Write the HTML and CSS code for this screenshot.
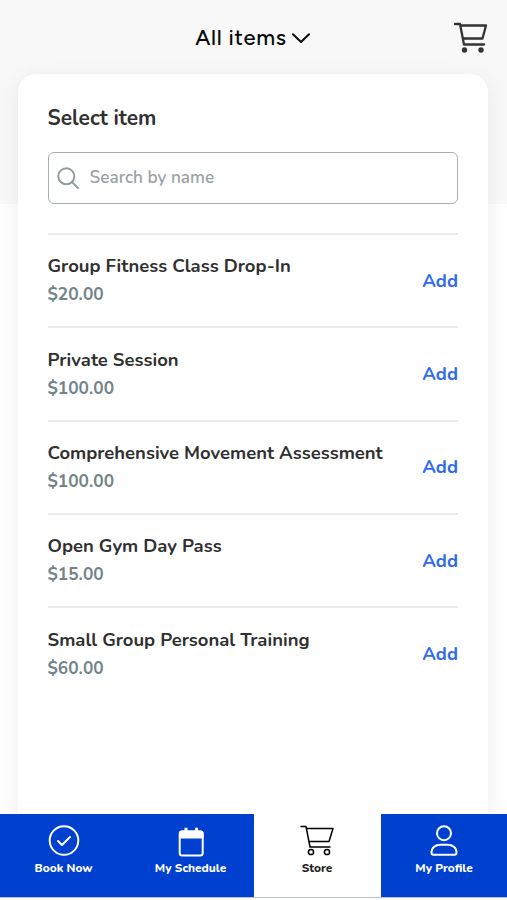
FILE: index.html
```html
<!DOCTYPE html>
<html lang="en">
<head>
<meta charset="utf-8">
<meta name="viewport" content="width=device-width, initial-scale=1">
<title>Store</title>
<link rel="stylesheet" href="styles.css">
</head>
<body>
<div class="app">
  <header class="topbar">
    <button class="filter"><span>All items</span>
      <svg class="chevron" width="18" height="11" viewBox="0 0 18 11"><path d="M1 1.200 9 9 17 1.200"/></svg>
    </button>
    <button class="cart" aria-label="Cart">
      <svg width="34" height="32" viewBox="0 0 34 32"><path d="M1 2h5l4 20.500h20M6.700 3.500H32l-3.500 13H8.800"/><circle cx="10.500" cy="28" r="2.700"/><circle cx="27" cy="28" r="2.700"/></svg>
    </button>
  </header>
  <main class="card">
    <h1 class="title">Select item</h1>
    <label class="search">
      <svg width="22" height="22" viewBox="0 0 22 22"><circle cx="9.300" cy="9.300" r="8"/><path d="m15 15 6 6"/></svg>
      <input class="search-input" type="text" placeholder="Search by name">
    </label>
    <ul class="items">
      <li class="item"><div><div class="name">Group Fitness Class Drop-In</div><div class="price">$20.00</div></div><button class="add">Add</button></li>
      <li class="item"><div><div class="name">Private Session</div><div class="price">$100.00</div></div><button class="add">Add</button></li>
      <li class="item"><div><div class="name">Comprehensive Movement Assessment</div><div class="price">$100.00</div></div><button class="add">Add</button></li>
      <li class="item"><div><div class="name">Open Gym Day Pass</div><div class="price">$15.00</div></div><button class="add">Add</button></li>
      <li class="item"><div><div class="name">Small Group Personal Training</div><div class="price">$60.00</div></div><button class="add">Add</button></li>
    </ul>
  </main>
  <nav class="tabs">
    <a class="tab"><svg width="34" height="32" viewBox="0 0 34 32"><circle cx="17" cy="15.500" r="14.300"/><path d="m11 16 4 4 8-8"/></svg><span>Book Now</span></a>
    <a class="tab"><svg width="34" height="32" viewBox="0 0 34 32"><rect x="5.700" y="6.500" width="23" height="24" rx="2.500"/><path class="solid" d="M5 13.500V8.500q0-3 3-3h2.500V2.700h3V5.500h7.500V2.700h3V5.500h2.500q3 0 3 3v5z"/></svg><span>My Schedule</span></a>
    <a class="tab active"><svg width="34" height="32" viewBox="0 0 34 32"><path d="M1 1.500h5l4 20.500h20M6.500 3.500H33l-4 13H8.900"/><circle cx="11" cy="27" r="2.600"/><circle cx="27" cy="27" r="2.600"/></svg><span>Store</span></a>
    <a class="tab"><svg width="34" height="32" viewBox="0 0 34 32"><circle cx="17" cy="8.200" r="7"/><path d="M6.500 29.700h21q2 0 2-2c0-5-4-8-9-8h-7c-5 0-9 3-9 8q0 2 2 2z"/></svg><span>My Profile</span></a>
  </nav>
</div>
</body>
</html>
```
FILE: styles.css
```css
* { box-sizing: border-box; }
body { margin: 0; background: #fff; font-family: Nunito, "Noto Sans", sans-serif; }
button { border: 0; padding: 0; background: none; font: inherit; }
svg { fill: none; stroke: currentColor; stroke-width: 2; stroke-linecap: round; stroke-linejoin: round; flex: none; }
.app { height: 900px; padding-bottom: 3px; display: flex; flex-direction: column; overflow: hidden; background: linear-gradient(#f8f8f8 204px, #fefefe 204px); }
.topbar { height: 74px; flex: none; display: grid; grid-template-columns: 1fr auto 1fr; align-items: center; padding: 2px 20px 0 18px; }
.filter { grid-column: 2; display: flex; align-items: center; gap: 5px; color: #0a0a0a; font: 500 22px/30px Figtree, Outfit, Montserrat, Lato, sans-serif; letter-spacing: 0.700px; }
.cart { justify-self: end; height: 32px; margin-right: -1px; color: #333; }
.cart svg { stroke-width: 2.300; }
.cart circle { fill: currentColor; stroke: none; }
.card { flex: 1; min-height: 0; margin: 0 19.500px 0 18px; padding: 29px 29.500px 0; background: #fff; border-radius: 18px 18px 0 0; box-shadow: 0 4px 20px rgba(0,0,0,.07); }
.title { margin: 0 0 19px; color: #303030; font-size: 20.900px; line-height: 30px; font-weight: 700; }
.search { height: 52px; display: flex; align-items: center; gap: 11px; padding: 0 8px; border: 1.500px solid #a5afb1; border-radius: 6px; color: #929c9f; }
.search-input { flex: 1; min-width: 0; border: 0; padding: 0; outline: 0; background: none; font: 600 17.200px/24px Nunito, "Noto Sans", sans-serif; color: #333; }
.search-input::placeholder { color: #9aa2a5; opacity: 1; }
.items { list-style: none; margin: 29px 0 0; padding: 0; }
.item { height: 93.300px; display: flex; justify-content: space-between; align-items: center; border-top: 2px solid #eaeaea; color: #303030; font-size: 18.450px; line-height: 28px; font-weight: 700; }
.name { padding-top: 0.700px; }
.price { color: #728389; font-size: 17.300px; padding-top: 1px; }
.add { color: #316be8; }
.tabs { flex: none; height: 83px; display: grid; grid-template-columns: 127px 127px 127px 1fr; position: relative; background: #0040cf; box-shadow: 0 1px 0 #b9c1d6; }
.tab { display: flex; flex-direction: column; align-items: center; padding-top: 11px; color: #fff; font-size: 11.850px; line-height: 18px; font-weight: 800; gap: 2px; }
.tab.active { background: #fff; color: #222; padding-right: 1px; }
.active svg { stroke-width: 1.500; color: #000; }
.solid { fill: currentColor; stroke: none; }
```
